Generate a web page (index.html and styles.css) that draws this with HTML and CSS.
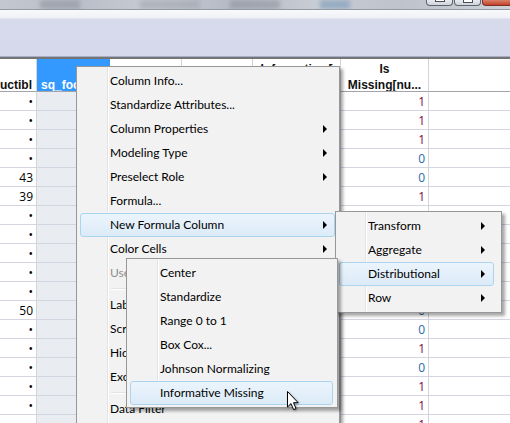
FILE: index.html
```html
<!DOCTYPE html>
<html>
<head>
<meta charset="utf-8">
<link rel="stylesheet" href="styles.css">
</head>
<body>
<div class="titlebar">
  <div class="blur b1"></div><div class="blur b2"></div><div class="blur b3"></div><div class="blur b4"></div>
  <div class="wbtns">
    <div class="wbtn"><span class="g-min"></span></div>
    <div class="wbtn"><span class="g-max"></span></div>
    <div class="wbtn close"></div>
  </div>
</div>
<div class="rule"></div>
<div class="toolbar"></div>
<div class="darkline"></div>

<div class="grid" id="grid">
  <div class="h h1"><span class="clipl">uctibl</span></div>
  <div class="h h2 sel">sq_foo</div>
  <div class="h"></div>
  <div class="h"></div>
  <div class="h">Informative [<br>sq_footage]</div>
  <div class="h">Is<br>Missing[nu...</div>
  <div class="h hl"></div>
</div>

<div class="menu main">
  <div class="item">Column Info...</div>
  <div class="item">Standardize Attributes...</div>
  <div class="item sub">Column Properties<i class="arr"></i></div>
  <div class="item sub">Modeling Type<i class="arr"></i></div>
  <div class="item sub">Preselect Role<i class="arr"></i></div>
  <div class="item">Formula...</div>
  <div class="item sub hot">New Formula Column<i class="arr"></i></div>
  <div class="item sub">Color Cells<i class="arr"></i></div>
  <div class="item dis">Use Value Labels</div>
  <div class="sep"></div>
  <div class="item">Label/Unlabel</div>
  <div class="item">Scroll Lock/Unlock</div>
  <div class="item">Hide/Unhide</div>
  <div class="item">Exclude/Unexclude</div>
  <div class="sep"></div>
  <div class="item">Data Filter</div>
  <div class="item">Sort</div>
</div>

<div class="menu sub1">
  <div class="item sub">Transform<i class="arr"></i></div>
  <div class="item sub">Aggregate<i class="arr"></i></div>
  <div class="item sub hot">Distributional<i class="arr"></i></div>
  <div class="item sub">Row<i class="arr"></i></div>
</div>

<div class="menu sub2">
  <div class="item">Center</div>
  <div class="item">Standardize</div>
  <div class="item">Range 0 to 1</div>
  <div class="item">Box Cox...</div>
  <div class="item">Johnson Normalizing</div>
  <div class="item hot">Informative Missing</div>
</div>

<svg class="cursor" width="14" height="22" viewBox="0 0 14 22">
  <path d="M1.5 1.5 L1.5 17 L5 13.6 L7.6 19.6 L10 18.6 L7.5 12.7 L12.2 12.7 Z" fill="#fff" stroke="#000" stroke-width="1" stroke-linejoin="miter"/>
</svg>

<script src="app.js"></script>
</body>
</html>
```

FILE: app.js
```js
var c1 = ['•','•','•','•','43','39','•','•','•','•','•','50','•','•','•','•','•','•'];
var c6 = [1,1,1,0,0,1,1,1,0,1,1,0,0,1,0,1,1,1];
var g = document.getElementById('grid');
var html = '';
for (var i = 0; i < c1.length; i++) {
  html += '<div class="c num">' + c1[i] + '</div>' +
          '<div class="c selc"></div>' +
          '<div class="c"></div>' +
          '<div class="c"></div>' +
          '<div class="c"></div>' +
          '<div class="c num ' + (c6[i] ? 'one' : 'zero') + '">' + c6[i] + '</div>' +
          '<div class="c last"></div>';
}
g.insertAdjacentHTML('beforeend', html);
```

FILE: styles.css
```css
* { box-sizing: border-box; }
html, body { margin: 0; padding: 0; }
body {
  width: 510px;
  height: 423px;
  overflow: hidden;
  position: relative;
  background: #fff;
  font-family: "Open Sans", "Noto Sans", sans-serif;
  font-size: 12px;
  color: #000;
}

/* blurred window title bar */
.titlebar {
  height: 9px;
  display: flex;
  background: linear-gradient(90deg, #c3c8d0 0%, #b9bec8 15%, #c7cbd3 30%, #b5bbc5 45%, #c8ccd4 62%, #bec3cc 78%, #cdd1d8 100%);
  overflow: hidden;
}
.blur { height: 9px; filter: blur(2px); background: #8e949e; opacity: .6; }
.b1 { width: 40px; margin-left: 40px; }
.b2 { width: 60px; margin-left: 60px; background: #a0a6b0; }
.b3 { width: 50px; margin-left: 30px; }
.b4 { width: 30px; margin-left: 40px; background: #7a9ab8; }
.wbtns { display: flex; margin-left: auto; gap: 1px; align-items: flex-start; }
.wbtn {
  width: 27px;
  height: 6px;
  border: 1px solid #5f656e;
  border-top: none;
  border-radius: 0 0 4px 4px;
  background: linear-gradient(#e7eaef, #cfd4db);
  display: flex;
  justify-content: center;
}
.wbtn.close {
  width: 28px;
  border-color: #7d2f22;
  border-right: none;
  background: linear-gradient(#d8806a, #c4412b);
  border-radius: 0 0 0 4px;
}
.g-min { width: 10px; height: 2px; border: 1px solid #4a4f57; border-top: none; background: #fff; }
.g-max { width: 10px; height: 3px; border: 1px solid #4a4f57; border-top: none; background: #fff; }

.rule { height: 1px; background: #9298a4; }
.toolbar {
  height: 47px;
  background: linear-gradient(to bottom, #f8f9fb 0px, #eff1f6 8px, #d6daeb 9px, #d5d9eb 100%);
  border-bottom: 1px solid #a8adc5;
}
.darkline { height: 2px; background: #747474; }

/* data grid */
.grid {
  display: grid;
  grid-template-columns: 37px 73px 72px 71px 88px 88px 1fr;
}
.h {
  height: 33px;
  padding-top: 2px;
  border-right: 1px solid #d3d3d9;
  border-bottom: 1px solid #a3a3a8;
  font-family: "Liberation Sans", Arial, sans-serif;
  font-weight: bold;
  font-size: 12px;
  line-height: 16px;
  text-align: center;
  color: #111;
  overflow: hidden;
  white-space: nowrap;
}
.h1 { text-align: left; padding-top: 18px; }
.h2 { text-align: left; padding: 18px 0 0 4px; }
.h.sel { background: #3399ff; color: #fff; border-right-color: #3399ff; }
.h.hl { border-right: none; }
.c {
  height: 19px;
  padding-top: 1px;
  border-right: 1px solid #d4d4dc;
  border-bottom: 1px solid #d4d5e1;
  line-height: 18px;
  font-size: 12px;
  white-space: nowrap;
}
.c.num { text-align: right; padding-right: 3px; }
.c.selc { background: #e9ecf0; border-right-color: #c9ccd4; }
.c.last { border-right: none; }
.c.one { color: #7c0048; }
.c.zero { color: #1f6aa3; }

/* context menus (overlays) */
.menu {
  position: absolute;
  background-color: #f2f2f2;
  border: 1px solid #979797;
  box-shadow: 3px 3px 3px rgba(0, 0, 0, 0.35);
  font-family: Lato, "Open Sans", sans-serif;
  font-size: 12px;
  color: #000;
}
.menu.main {
  left: 76px;
  top: 66px;
  width: 264px;
  height: 420px;
  padding: 2px 4px 2px 3px;
  background-image: linear-gradient(to right, transparent 30px, #e2e3e3 30px, #e2e3e3 31px, #ffffff 31px, #ffffff 32px, transparent 32px);
}
.menu.sub1 {
  left: 335px;
  top: 211px;
  width: 167px;
  padding: 2px 7px 2px 3px;
  background-image: linear-gradient(to right, transparent 29px, #e2e3e3 29px, #e2e3e3 30px, #ffffff 30px, #ffffff 31px, transparent 31px);
}
.menu.sub2 {
  left: 126px;
  top: 258px;
  width: 212px;
  padding: 2px 4px 2px 3px;
  background-image: linear-gradient(to right, transparent 30px, #e2e3e3 30px, #e2e3e3 31px, #ffffff 31px, #ffffff 32px, transparent 32px);
}
.item {
  height: 24px;
  display: flex;
  align-items: center;
  padding-left: 29px;
  padding-right: 7px;
  padding-bottom: 1px;
  border: 1px solid transparent;
  border-radius: 3px;
  white-space: nowrap;
}
.sub1 .item { padding-left: 28px; padding-right: 8px; }
.item.hot {
  background: linear-gradient(#ebf4fc, #dcebf8);
  border-color: #abd5ef;
}
.item.dis { color: #8d8d8d; }
.arr {
  margin-left: auto;
  width: 0;
  height: 0;
  border-left: 4px solid #000;
  border-top: 4px solid transparent;
  border-bottom: 4px solid transparent;
}
.sep {
  height: 8px;
  margin-left: 31px;
  background: linear-gradient(to bottom, transparent 3px, #e2e3e3 3px, #e2e3e3 4px, #fff 4px, #fff 5px, transparent 5px);
}

.cursor {
  position: absolute;
  left: 286px;
  top: 390px;
  filter: drop-shadow(1px 1px 1px rgba(0,0,0,.35));
}
```
